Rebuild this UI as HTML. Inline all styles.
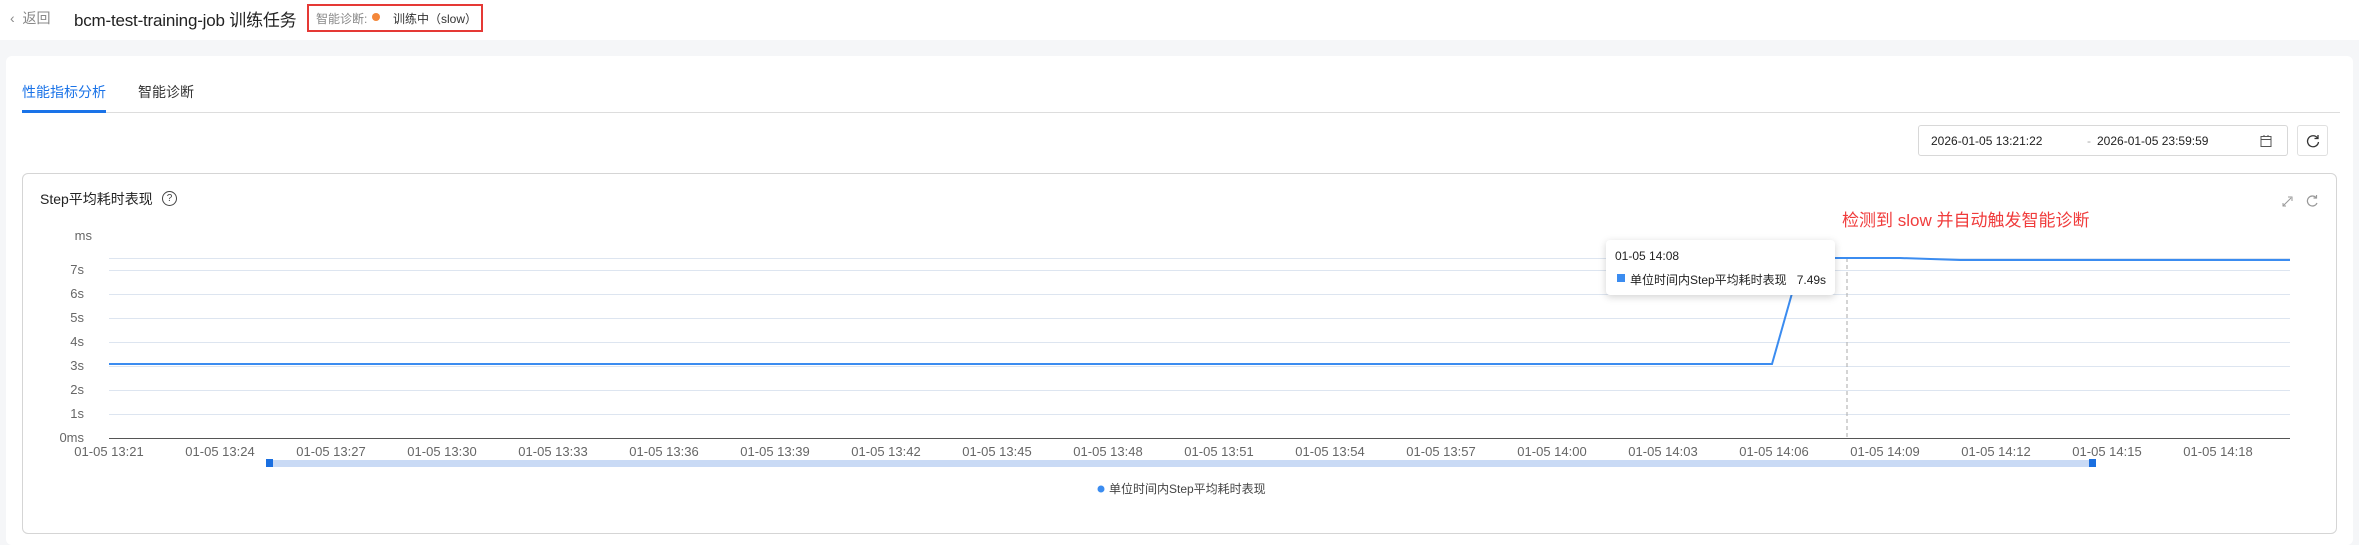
<!DOCTYPE html>
<html><head><meta charset="utf-8"><style>
*{margin:0;padding:0;box-sizing:border-box}
body{width:2359px;height:545px;overflow:hidden;background:#f5f6f8;font-family:"Liberation Sans","Noto Sans CJK SC",sans-serif;position:relative}
.abs{position:absolute}
</style></head><body>
<div class="abs" style="left:0;top:0;width:2359px;height:40px;background:#fff"></div>
<div class="abs" style="left:10px;top:8px;font-size:14px;color:#888">‹&nbsp; 返回</div>
<div class="abs" style="left:74px;top:6px;font-size:17px;color:#222;letter-spacing:-0.2px">bcm-test-training-job 训练任务</div>
<div class="abs" style="left:307px;top:4px;width:176px;height:28px;border:2px solid #e53935"></div>
<div class="abs" style="left:316px;top:10px;font-size:12px;color:#888">智能诊断:</div>
<div class="abs" style="left:372px;top:13px;width:8px;height:8px;border-radius:50%;background:#f4873a"></div>
<div class="abs" style="left:393px;top:10px;font-size:12px;color:#333">训练中（slow）</div>

<div class="abs" style="left:6px;top:56px;width:2347px;height:489px;background:#fff;border-radius:6px"></div>
<div class="abs" style="left:22px;top:82px;font-size:14px;color:#1a73e8">性能指标分析</div>
<div class="abs" style="left:138px;top:82px;font-size:14px;color:#333">智能诊断</div>
<div class="abs" style="left:22px;top:112px;width:2318px;height:1px;background:#ddd"></div>
<div class="abs" style="left:22px;top:110px;width:84px;height:3px;background:#1a73e8"></div>

<div class="abs" style="left:1918px;top:125px;width:370px;height:31px;border:1px solid #d8d8d8;border-radius:3px;font-size:12px;color:#222">
<span class="abs" style="left:12px;top:8px">2026-01-05 13:21:22</span>
<span class="abs" style="left:168px;top:8px;color:#aaa">-</span>
<span class="abs" style="left:178px;top:8px">2026-01-05 23:59:59</span>
<svg class="abs" style="left:340px;top:8px" width="14" height="14" viewBox="0 0 14 14"><rect x="2" y="2.5" width="10" height="10" fill="none" stroke="#555"/><line x1="2" y1="5.5" x2="12" y2="5.5" stroke="#555"/><line x1="5" y1="1" x2="5" y2="3" stroke="#555"/><line x1="9" y1="1" x2="9" y2="3" stroke="#555"/></svg>
</div>
<div class="abs" style="left:2297px;top:125px;width:31px;height:31px;border:1px solid #e0e0e0;border-radius:3px">
<svg class="abs" style="left:7px;top:7px" width="16" height="16" viewBox="0 0 16 16"><path d="M12.5 5A5.5 5.5 0 1 0 13.5 9" fill="none" stroke="#333" stroke-width="1.3"/><path d="M13 2v3.5h-3.5" fill="none" stroke="#333" stroke-width="1.3"/></svg>
</div>

<div class="abs" style="left:22px;top:173px;width:2315px;height:361px;border:1px solid #d5d5d5;border-radius:6px"></div>
<div class="abs" style="left:40px;top:189px;font-size:14px;color:#222">Step平均耗时表现</div>
<div class="abs" style="left:162px;top:191px;width:15px;height:15px;border:1px solid #444;border-radius:50%;font-size:10px;text-align:center;line-height:13px;color:#444">?</div>
<div class="abs" style="left:1842px;top:206px;font-size:17px;color:#f03c3c">检测到 slow 并自动触发智能诊断</div>
<svg class="abs" style="left:2280px;top:193px" width="50" height="16" viewBox="0 0 50 16"><path d="M3 13L11 5M8 4h4v4M3 10v3h3" fill="none" stroke="#999" stroke-width="1"/><path d="M36 4.5A5 5 0 1 0 37 10" fill="none" stroke="#999" stroke-width="1.2"/><path d="M36.5 2v3h-3" fill="none" stroke="#999" stroke-width="1.2"/></svg>

<svg class="abs" style="left:0;top:0" width="2359" height="545">
<g font-family="Liberation Sans,sans-serif" font-size="13" fill="#666">
<text x="92" y="240" text-anchor="end">ms</text>
<text x="84" y="274" text-anchor="end">7s</text>
<text x="84" y="298" text-anchor="end">6s</text>
<text x="84" y="322" text-anchor="end">5s</text>
<text x="84" y="346" text-anchor="end">4s</text>
<text x="84" y="370" text-anchor="end">3s</text>
<text x="84" y="394" text-anchor="end">2s</text>
<text x="84" y="418" text-anchor="end">1s</text>
<text x="84" y="442" text-anchor="end">0ms</text>
</g>
<g stroke="#dde5f0" stroke-width="1">
<line x1="109" y1="258.5" x2="2290" y2="258.5"/>
<line x1="109" y1="270.5" x2="2290" y2="270.5"/>
<line x1="109" y1="294.5" x2="2290" y2="294.5"/>
<line x1="109" y1="318.5" x2="2290" y2="318.5"/>
<line x1="109" y1="342.5" x2="2290" y2="342.5"/>
<line x1="109" y1="366.5" x2="2290" y2="366.5"/>
<line x1="109" y1="390.5" x2="2290" y2="390.5"/>
<line x1="109" y1="414.5" x2="2290" y2="414.5"/>
</g>
<line x1="109" y1="438.5" x2="2290" y2="438.5" stroke="#555"/>
<line x1="1847" y1="258" x2="1847" y2="438" stroke="#aaa" stroke-dasharray="4,3"/>
<polyline points="109,364 1772,364 1802,258 1900,258 1960,260 2290,260" fill="none" stroke="#3b8cf0" stroke-width="2"/>
<g font-family="Liberation Sans,sans-serif" font-size="13" fill="#666" text-anchor="middle">
<text x="109" y="456">01-05 13:21</text><text x="220" y="456">01-05 13:24</text><text x="331" y="456">01-05 13:27</text><text x="442" y="456">01-05 13:30</text><text x="553" y="456">01-05 13:33</text><text x="664" y="456">01-05 13:36</text><text x="775" y="456">01-05 13:39</text><text x="886" y="456">01-05 13:42</text><text x="997" y="456">01-05 13:45</text><text x="1108" y="456">01-05 13:48</text><text x="1219" y="456">01-05 13:51</text><text x="1330" y="456">01-05 13:54</text><text x="1441" y="456">01-05 13:57</text><text x="1552" y="456">01-05 14:00</text><text x="1663" y="456">01-05 14:03</text><text x="1774" y="456">01-05 14:06</text><text x="1885" y="456">01-05 14:09</text><text x="1996" y="456">01-05 14:12</text><text x="2107" y="456">01-05 14:15</text><text x="2218" y="456">01-05 14:18</text>
</g>
<rect x="267" y="460" width="1828" height="7" fill="#c9daf5"/>
<rect x="266" y="459" width="7" height="8" fill="#1a6fe0"/>
<rect x="2089" y="459" width="7" height="8" fill="#1a6fe0"/>
<circle cx="1101" cy="489" r="3.5" fill="#3b8cf0"/>
<text x="1109" y="493" font-family="Liberation Sans,'Noto Sans CJK SC',sans-serif" font-size="12" fill="#444">单位时间内Step平均耗时表现</text>
</svg>

<div class="abs" style="left:1606px;top:240px;width:229px;height:55px;background:#fff;border-radius:4px;box-shadow:0 2px 8px rgba(0,0,0,.18);font-size:12px;color:#222">
<div class="abs" style="left:9px;top:9px">01-05 14:08</div>
<div class="abs" style="left:11px;top:34px;width:8px;height:8px;background:#3b8cf0"></div>
<div class="abs" style="left:24px;top:31px">单位时间内Step平均耗时表现&nbsp;&nbsp; 7.49s</div>
</div>
</body></html>
